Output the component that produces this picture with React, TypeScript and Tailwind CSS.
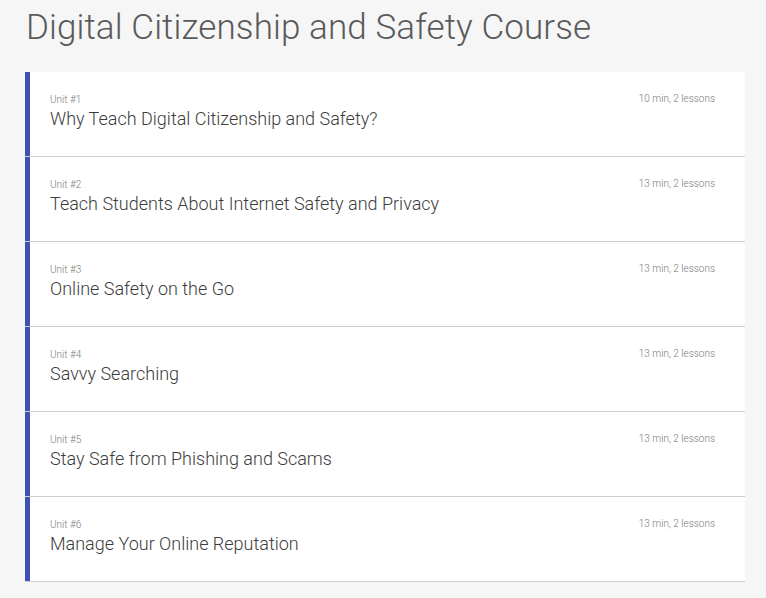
const units = [
  { n: 1, title: "Why Teach Digital Citizenship and Safety?", meta: "10 min, 2 lessons" },
  { n: 2, title: "Teach Students About Internet Safety and Privacy", meta: "13 min, 2 lessons" },
  { n: 3, title: "Online Safety on the Go", meta: "13 min, 2 lessons" },
  { n: 4, title: "Savvy Searching", meta: "13 min, 2 lessons" },
  { n: 5, title: "Stay Safe from Phishing and Scams", meta: "13 min, 2 lessons" },
  { n: 6, title: "Manage Your Online Reputation", meta: "13 min, 2 lessons" },
];

function UnitRow({ n, title, meta }: { n: number; title: string; meta: string }) {
  return (
    <div className="flex h-[85px] bg-white border-b border-[#cfcfcf]">
      <div className="w-[5px] bg-[#3f51b5]" />
      <div className="flex flex-1 justify-between pl-[20px] pr-[30px] pt-[22px]">
        <div>
          <div className="text-[10px] leading-[12px] font-light text-[#7a7a7a]">Unit #{n}</div>
          <div className="mt-[2px] text-[18px] leading-[22px] font-light text-[#3c3c3c]">{title}</div>
        </div>
        <div className="text-[10px] leading-[12px] font-light text-[#7a7a7a] -mt-[1px]">{meta}</div>
      </div>
    </div>
  );
}

export default function App() {
  return (
    <div className="min-h-[598px] bg-[#f6f6f6] px-[25px] pt-[7px]" style={{ fontFamily: "Roboto, 'Liberation Sans', sans-serif" }}>
      <h1 className="text-[35px] leading-[42px] font-light tracking-[0.1px] text-[#5a5a5a] pl-[1px]">
        Digital Citizenship and Safety Course
      </h1>
      <div className="mt-[23px] w-[720px]">
        {units.map((u) => (
          <UnitRow key={u.n} {...u} />
        ))}
      </div>
    </div>
  );
}
